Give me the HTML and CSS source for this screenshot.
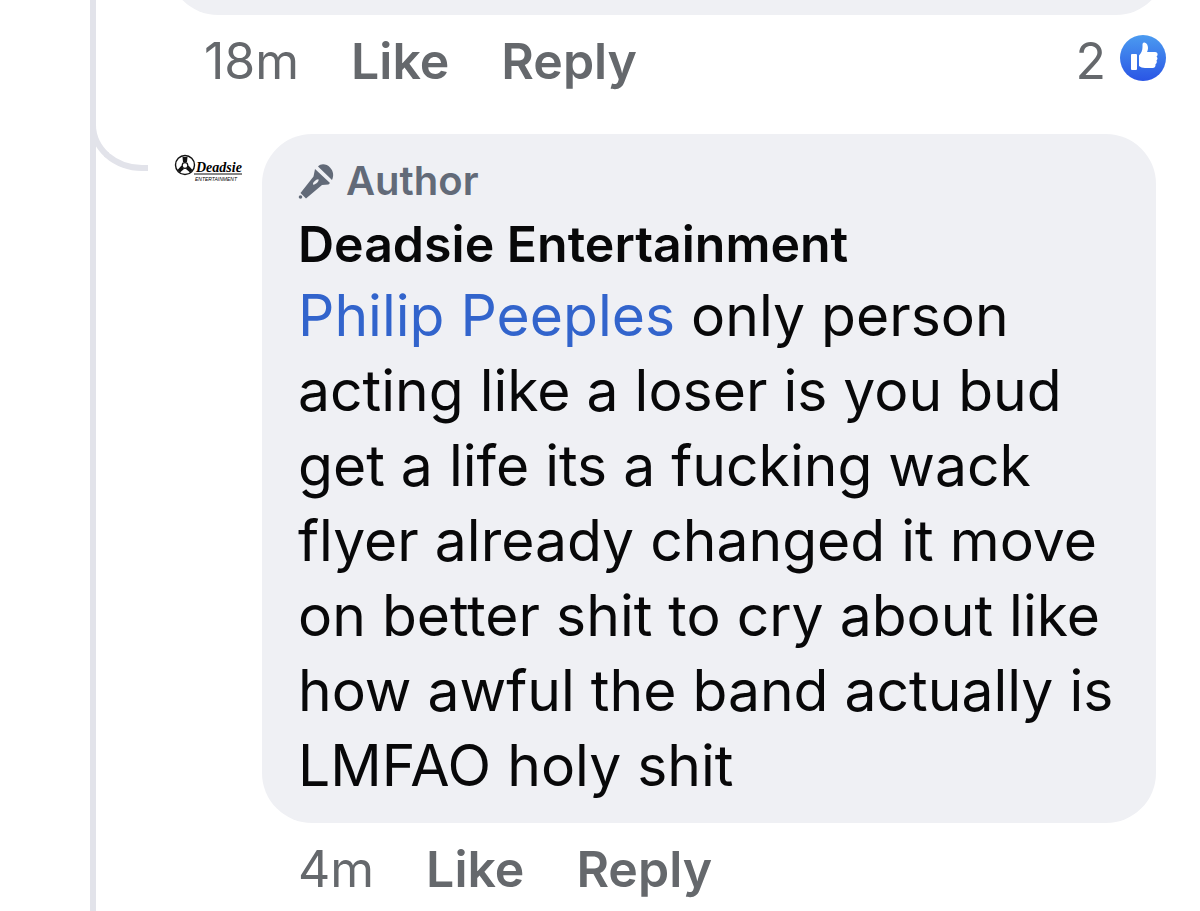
FILE: index.html
```html
<!DOCTYPE html>
<html lang="en">
<head>
  <meta charset="UTF-8" />
  <meta name="viewport" content="width=device-width, initial-scale=1.0"/>
  <title>Comments</title>
  <link rel="stylesheet" href="styles.css">
</head>
<body>
  <main class="thread">
    <article class="parent">
      <div class="bubble-end"></div>
      <div class="actions">
        <span class="time">18m</span>
        <button type="button">Like</button>
        <button type="button">Reply</button>
        <span class="reactions">
          2
          <svg class="like-icon" viewBox="0 0 46 46" role="img" aria-label="Likes">
            <defs>
              <linearGradient id="blue" x1="0" y1="0" x2="0" y2="1">
                <stop offset="0" stop-color="#4b9bf0"/>
                <stop offset="1" stop-color="#2a55e5"/>
              </linearGradient>
            </defs>
            <circle cx="23" cy="23" r="23" fill="url(#blue)"/>
            <rect x="11" y="19" width="6" height="16" rx="1" fill="#fff"/>
            <path d="M19 20.500C21.500 18 22.500 15 22.500 12V9.500C22.500 8 23.500 7.500 24.500 7.500C27 8 28 10.500 28 13C28 14.500 27.500 16 27 17H35C37 17 38 18.500 37.500 20C37.300 20.800 37 21.200 36.500 21.500C37.800 22.500 37.800 24.500 36.500 25.500C37.200 27 36.700 28.500 35.500 29.200C35.800 31.500 34.800 33 32.500 33H25C22.500 33 20.500 32 19 31Z" fill="#fff"/>
          </svg>
        </span>
      </div>
    </article>

    <article class="reply">
      <span class="branch"></span>
      <a class="avatar" href="#" aria-label="Deadsie Entertainment">
        <svg viewBox="0 0 70 30">
          <circle cx="11" cy="11" r="9.500" fill="#fff" stroke="#111" stroke-width="1.400"/>
          <path d="M8.500 3H13.500L13 8H9ZM3.500 16L7.500 11.500L10 15L6 18.500ZM18.500 16L14.500 11.500L12 15L16 18.500Z" fill="#111"/>
          <circle cx="11" cy="11.500" r="2.800" fill="#fff" stroke="#111" stroke-width="1.200"/>
          <path d="M20 20H68" stroke="#111" stroke-width="1"/>
          <text class="logo-name" x="22" y="18">Deadsie</text>
          <text class="logo-sub" x="21" y="27">ENTERTAINMENT</text>
        </svg>
      </a>
      <div class="content">
        <div class="bubble">
          <div class="author">
            <svg class="mic" viewBox="0 0 36 36" aria-hidden="true">
              <path d="M20 3.500C23 0 29 1 32 4.500C35.500 8 36 13 34 17Z" fill="#626a78"/>
              <path fill-rule="evenodd" d="M17 6L32 20L30.500 21.500L24 22L8 35.500L2.500 30L15.500 13.500ZM20.500 16.500C19 15.500 14.500 19.500 15 21.500C16.500 22.500 21.500 18.500 20.500 16.500Z" fill="#626a78"/>
              <circle cx="2.500" cy="34" r="1.800" fill="#626a78"/>
            </svg>
            <span>Author</span>
          </div>
          <h2>Deadsie Entertainment</h2>
          <p><a href="#">Philip Peeples</a> only person acting like a loser is you bud get a life its a fucking wack flyer already changed it move on better shit to cry about like how awful the band actually is LMFAO holy shit</p>
        </div>
        <div class="actions">
          <span class="time">4m</span>
          <button type="button">Like</button>
          <button type="button">Reply</button>
        </div>
      </div>
    </article>
  </main>
</body>
</html>
```

FILE: styles.css
```css
body {
  margin: 0;
  font-family: Inter, "Liberation Sans", sans-serif;
  background-color: #fff;
  color: #080809;
}

.thread {
  box-sizing: border-box;
  min-height: 100vh;
  margin-left: 90px;
  border-left: 6px solid #e2e3ea;
}

.parent {
  padding-left: 72px;
  padding-right: 34px;
}

.bubble-end {
  height: 15px;
  overflow: hidden;
  display: flex;
  align-items: flex-end;
}

.bubble-end::before {
  content: "";
  flex: 1;
  height: 120px;
  border-radius: 50px;
  background-color: #eff0f4;
}

.actions {
  display: flex;
  align-items: center;
  gap: 52px;
  padding: 14px 0 0 36px;
  font-size: 50px;
  line-height: 64px;
  color: #65686c;
}

.actions button {
  padding: 0;
  border: none;
  background: none;
  font: inherit;
  font-weight: 600;
  color: inherit;
  cursor: pointer;
}

.reactions {
  display: flex;
  align-items: center;
  gap: 14px;
  margin-left: auto;
}

.like-icon {
  width: 46px;
  height: 46px;
  margin-bottom: 6px;
}

.reply {
  position: relative;
  display: flex;
  align-items: flex-start;
  gap: 18px;
  padding: 41px 44px 0 78px;
}

/* curve from the thread line to the avatar */
.branch {
  position: absolute;
  top: 26px;
  left: -6px;
  width: 52px;
  height: 46px;
  border-left: 6px solid #e2e3ea;
  border-bottom: 6px solid #e2e3ea;
  border-bottom-left-radius: 52px 46px;
}

.avatar {
  flex: none;
  width: 70px;
  margin-top: 20px;
}

.avatar svg {
  display: block;
}

.logo-name {
  font: italic bold 14px "Liberation Serif", serif;
}

.logo-sub {
  font: italic 5px "Liberation Sans", sans-serif;
}

.content {
  flex: 1;
}

.bubble {
  padding: 24px 30px 20px 36px;
  border-radius: 50px;
  background-color: #eff0f4;
}

.author {
  display: flex;
  align-items: center;
  gap: 12px;
  font-size: 40px;
  font-weight: 600;
  line-height: 46px;
  color: #626a78;
}

.mic {
  width: 36px;
  height: 36px;
}

h2 {
  margin: 10px 0 4px;
  font-size: 50px;
  font-weight: 600;
  line-height: 60px;
}

p {
  margin: 0;
  font-size: 57px;
  line-height: 75px;
}

p a {
  color: #3264cc;
  text-decoration: none;
}
```
